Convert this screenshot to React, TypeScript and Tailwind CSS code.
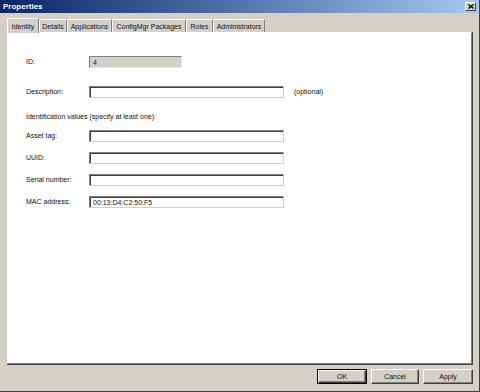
import React from 'react';

const tabs = [
  { label: 'Identity', w: 'w-[32px]', active: true },
  { label: 'Details', w: 'w-[28px]' },
  { label: 'Applications', w: 'w-[45px]' },
  { label: 'ConfigMgr Packages', w: 'w-[74px]' },
  { label: 'Roles', w: 'w-[27px]' },
  { label: 'Administrators', w: 'w-[52px]' },
];

function Field({ label, value, className = '' }: { label: string; value?: string; className?: string }) {
  return (
    <div className={`flex items-center h-[12px] ${className}`}>
      <span className="w-[63px] shrink-0">{label}</span>
      <div className="w-[195px] h-[12px] bg-white border-t border-l border-[#808080] border-b border-r border-b-[#d4d0c8] border-r-[#d4d0c8] shadow-[inset_1px_1px_0_#404040] flex items-center pl-[3px] leading-none">
        {value}
      </div>
    </div>
  );
}

function Button({ label, w, isDefault }: { label: string; w: string; isDefault?: boolean }) {
  return (
    <div className={`${w} h-[15px] ${isDefault ? 'border border-black' : ''}`}>
      <div className="w-full h-full border-t border-l border-white border-r border-b border-r-[#404040] border-b-[#404040] shadow-[inset_-1px_-1px_0_#808080] bg-[#d4d0c8] flex items-center justify-center leading-none">
        {label}
      </div>
    </div>
  );
}

export default function App() {
  return (
    <div className="w-[480px] h-[392px] bg-[#d4d0c8] flex flex-col text-[7px] text-[#111] font-['Liberation_Sans',Arial,sans-serif] border-r border-b border-[#404040] overflow-hidden">
      {/* title bar */}
      <div className="h-[13px] shrink-0 bg-gradient-to-r from-[#0a246a] to-[#a6caf0] flex items-center justify-between pl-[3px] pr-[3px]">
        <span className="text-white font-bold text-[8px] leading-none">Properties</span>
        <div className="w-[11px] h-[9px] bg-[#d4d0c8] border-t border-l border-white border-r border-b border-r-[#404040] border-b-[#404040] flex items-center justify-center">
          <svg width="6" height="5" viewBox="0 0 6 5">
            <path d="M0.5 0.5 L5.5 4.5 M5.5 0.5 L0.5 4.5" stroke="#000" strokeWidth="1.3" />
          </svg>
        </div>
      </div>

      {/* tabs */}
      <div className="h-[19px] shrink-0 flex items-end pl-[7px]">
        {tabs.map((t) => (
          <div
            key={t.label}
            className={`${t.w} ${t.active ? 'h-[15px] -mb-[1px] relative z-10' : 'h-[13px]'} bg-[#d4d0c8] border-t border-l border-white border-r border-r-[#808080] flex items-center justify-center leading-none whitespace-nowrap`}
          >
            {t.label}
          </div>
        ))}
      </div>

      {/* page */}
      <div className="flex-1 ml-[7px] mr-[6px] border-r border-b border-[#404040] flex">
        <div className="flex-1 bg-white border-t border-l border-white border-r border-b border-r-[#808080] border-b-[#808080] pl-[18px] pt-[23px] flex flex-col">
          <div className="flex items-center h-[12px]">
            <span className="w-[63px] shrink-0">ID:</span>
            <div className="w-[93px] h-[12px] bg-[#d4d0c8] border-t border-l border-[#808080] border-b border-r border-b-[#e8e6e0] border-r-[#e8e6e0] flex items-center pl-[3px] leading-none">
              4
            </div>
          </div>

          <div className="flex items-center mt-[18px]">
            <Field label="Description:" />
            <span className="ml-[10px]">(optional)</span>
          </div>

          <div className="mt-[14px] h-[9px] leading-[9px]">Identification values (specify at least one):</div>

          <Field label="Asset tag:" className="mt-[9px]" />
          <Field label="UUID:" className="mt-[10px]" />
          <Field label="Serial number:" className="mt-[10px]" />
          <Field label="MAC address:" value="00:13:D4:C2:50:F5" className="mt-[10px]" />
        </div>
      </div>

      {/* buttons */}
      <div className="h-[26px] shrink-0 flex justify-end items-start pt-[4px] pr-[6px] gap-[4px]">
        <Button label="OK" w="w-[50px]" isDefault />
        <Button label="Cancel" w="w-[48px]" />
        <Button label="Apply" w="w-[50px]" />
      </div>
    </div>
  );
}
